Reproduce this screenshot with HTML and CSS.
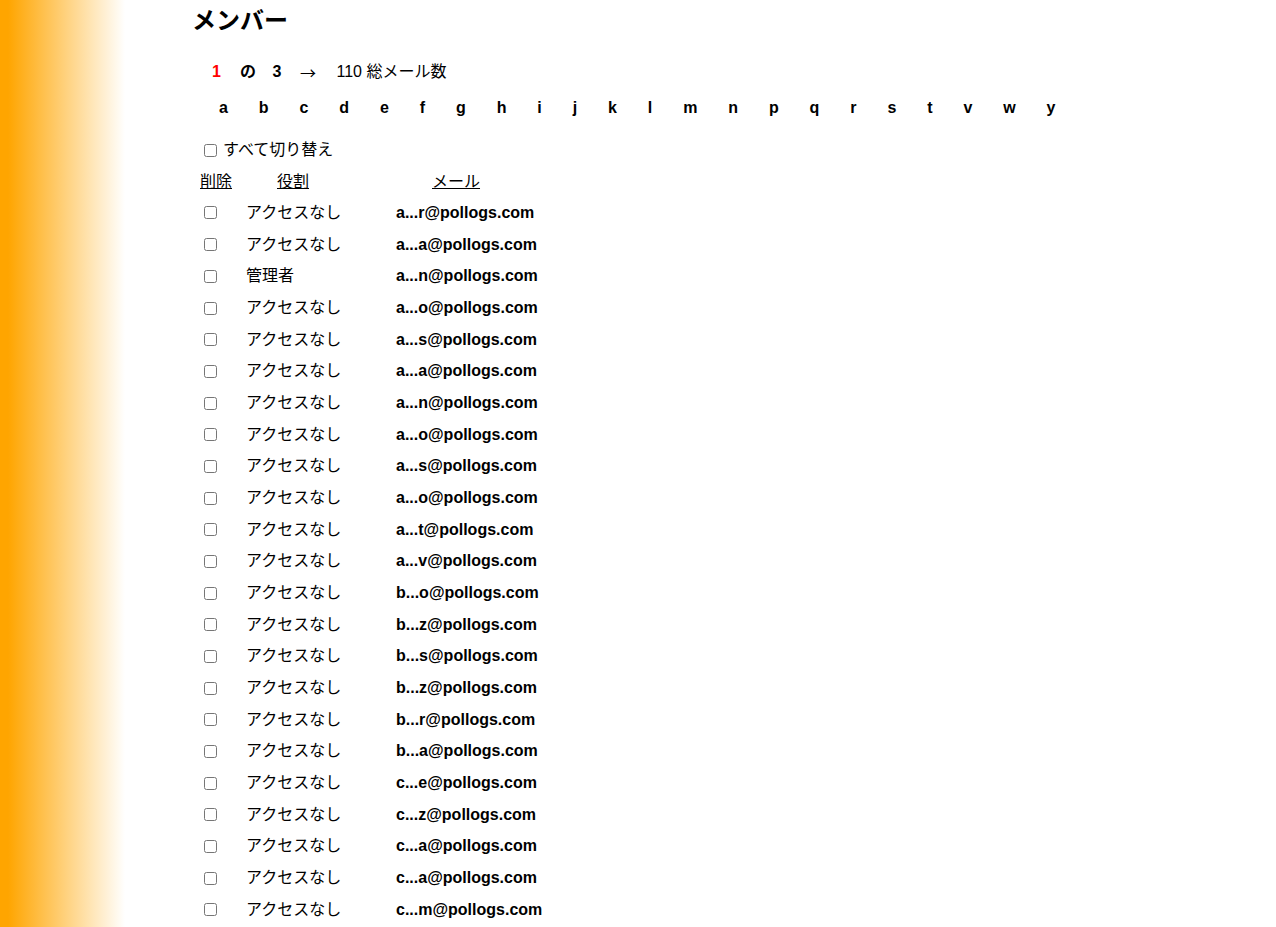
FILE: index.html
```html
<!DOCTYPE html>
<html lang="ja">
<head>
<meta charset="utf-8">
<title>メンバー</title>
<link rel="stylesheet" href="styles.css">
</head>
<body>
<main class="page">
  <h2 class="title">メンバー</h2>
  <div class="pager">
    <span class="pg pg-cur">1</span>
    <span class="pg pg-of">の</span>
    <span class="pg pg-total">3</span>
    <a class="pg pg-arrow">→</a>
    <span class="pg-count">110 総メール数</span>
  </div>
  <nav class="letters">
    <a>a</a><a>b</a><a>c</a><a>d</a><a>e</a><a>f</a><a>g</a><a>h</a><a>i</a><a>j</a><a>k</a><a>l</a><a>m</a><a>n</a><a>p</a><a>q</a><a>r</a><a>s</a><a>t</a><a>v</a><a>w</a><a>y</a>
  </nav>
  <label class="toggle"><input type="checkbox" class="cb"><span>すべて切り替え</span></label>
  <div class="table">
    <div class="row head"><a class="h-del">削除</a><a class="h-role">役割</a><a class="h-mail">メール</a></div>
    <div class="row"><span class="c-cb"><input type="checkbox" class="cb"></span><span class="c-role">アクセスなし</span><span class="c-mail">a...r@pollogs.com</span></div>
    <div class="row"><span class="c-cb"><input type="checkbox" class="cb"></span><span class="c-role">アクセスなし</span><span class="c-mail">a...a@pollogs.com</span></div>
    <div class="row"><span class="c-cb"><input type="checkbox" class="cb"></span><span class="c-role">管理者</span><span class="c-mail">a...n@pollogs.com</span></div>
    <div class="row"><span class="c-cb"><input type="checkbox" class="cb"></span><span class="c-role">アクセスなし</span><span class="c-mail">a...o@pollogs.com</span></div>
    <div class="row"><span class="c-cb"><input type="checkbox" class="cb"></span><span class="c-role">アクセスなし</span><span class="c-mail">a...s@pollogs.com</span></div>
    <div class="row"><span class="c-cb"><input type="checkbox" class="cb"></span><span class="c-role">アクセスなし</span><span class="c-mail">a...a@pollogs.com</span></div>
    <div class="row"><span class="c-cb"><input type="checkbox" class="cb"></span><span class="c-role">アクセスなし</span><span class="c-mail">a...n@pollogs.com</span></div>
    <div class="row"><span class="c-cb"><input type="checkbox" class="cb"></span><span class="c-role">アクセスなし</span><span class="c-mail">a...o@pollogs.com</span></div>
    <div class="row"><span class="c-cb"><input type="checkbox" class="cb"></span><span class="c-role">アクセスなし</span><span class="c-mail">a...s@pollogs.com</span></div>
    <div class="row"><span class="c-cb"><input type="checkbox" class="cb"></span><span class="c-role">アクセスなし</span><span class="c-mail">a...o@pollogs.com</span></div>
    <div class="row"><span class="c-cb"><input type="checkbox" class="cb"></span><span class="c-role">アクセスなし</span><span class="c-mail">a...t@pollogs.com</span></div>
    <div class="row"><span class="c-cb"><input type="checkbox" class="cb"></span><span class="c-role">アクセスなし</span><span class="c-mail">a...v@pollogs.com</span></div>
    <div class="row"><span class="c-cb"><input type="checkbox" class="cb"></span><span class="c-role">アクセスなし</span><span class="c-mail">b...o@pollogs.com</span></div>
    <div class="row"><span class="c-cb"><input type="checkbox" class="cb"></span><span class="c-role">アクセスなし</span><span class="c-mail">b...z@pollogs.com</span></div>
    <div class="row"><span class="c-cb"><input type="checkbox" class="cb"></span><span class="c-role">アクセスなし</span><span class="c-mail">b...s@pollogs.com</span></div>
    <div class="row"><span class="c-cb"><input type="checkbox" class="cb"></span><span class="c-role">アクセスなし</span><span class="c-mail">b...z@pollogs.com</span></div>
    <div class="row"><span class="c-cb"><input type="checkbox" class="cb"></span><span class="c-role">アクセスなし</span><span class="c-mail">b...r@pollogs.com</span></div>
    <div class="row"><span class="c-cb"><input type="checkbox" class="cb"></span><span class="c-role">アクセスなし</span><span class="c-mail">b...a@pollogs.com</span></div>
    <div class="row"><span class="c-cb"><input type="checkbox" class="cb"></span><span class="c-role">アクセスなし</span><span class="c-mail">c...e@pollogs.com</span></div>
    <div class="row"><span class="c-cb"><input type="checkbox" class="cb"></span><span class="c-role">アクセスなし</span><span class="c-mail">c...z@pollogs.com</span></div>
    <div class="row"><span class="c-cb"><input type="checkbox" class="cb"></span><span class="c-role">アクセスなし</span><span class="c-mail">c...a@pollogs.com</span></div>
    <div class="row"><span class="c-cb"><input type="checkbox" class="cb"></span><span class="c-role">アクセスなし</span><span class="c-mail">c...a@pollogs.com</span></div>
    <div class="row"><span class="c-cb"><input type="checkbox" class="cb"></span><span class="c-role">アクセスなし</span><span class="c-mail">c...m@pollogs.com</span></div>
  </div>
</main>
</body>
</html>
```

FILE: styles.css
```css
html, body {
  margin: 0;
  padding: 0;
}
body {
  min-height: 100vh;
  background: linear-gradient(to right, #ffa500 0, #ffa500 8px, #ffffff 125px) no-repeat;
  background-color: #ffffff;
  color: #000;
  font-family: "Liberation Sans", "Noto Sans CJK JP", sans-serif;
  font-size: 16px;
}
.page {
  padding-left: 192px;
  overflow: hidden;
}
.title {
  margin: 0;
  padding-top: 7px;
  height: 28px;
  line-height: 28px;
  font-size: 24px;
  font-weight: bold;
}
.pager {
  display: flex;
  align-items: center;
  margin-top: 25px;
  height: 24px;
  line-height: 24px;
  padding-left: 20px;
}
.pg {
  display: inline-block;
  font-weight: bold;
  color: #000;
}
.pg-cur { width: 28px; color: #ff0000; }
.pg-of { width: 32.5px; }
.pg-total { width: 27.5px; }
.pg-arrow {
  width: 36.5px;
  font-weight: normal;
  font-family: "Noto Sans CJK JP", sans-serif;
}
.letters {
  display: flex;
  gap: 30.9px;
  margin-top: 12px;
  height: 24px;
  line-height: 24px;
  padding-left: 27px;
  font-weight: bold;
}
.letters a { color: #000; text-decoration: none; }
.toggle {
  display: flex;
  align-items: center;
  margin-top: 18px;
  height: 24px;
  line-height: 24px;
  padding-left: 12px;
}
.cb {
  margin: 0;
  width: 13px;
  height: 13px;
}
.toggle .cb { margin-right: 6px; }
.table {
  margin-top: 8px;
  padding-left: 8px;
}
.row {
  display: grid;
  grid-template-columns: 46px 150px auto;
  align-items: center;
  height: 31.68px;
}
.row.head {
  height: 24px;
  line-height: 24px;
  margin-bottom: 3.16px;
}
.head a {
  color: #000;
  text-decoration: underline;
  justify-self: start;
}
.h-role { margin-left: 31px; }
.h-mail { margin-left: 36px; }
.c-cb {
  display: flex;
  align-items: center;
  padding-left: 4px;
}
.c-role { line-height: 20px; }
.c-mail { font-weight: bold; }
```
